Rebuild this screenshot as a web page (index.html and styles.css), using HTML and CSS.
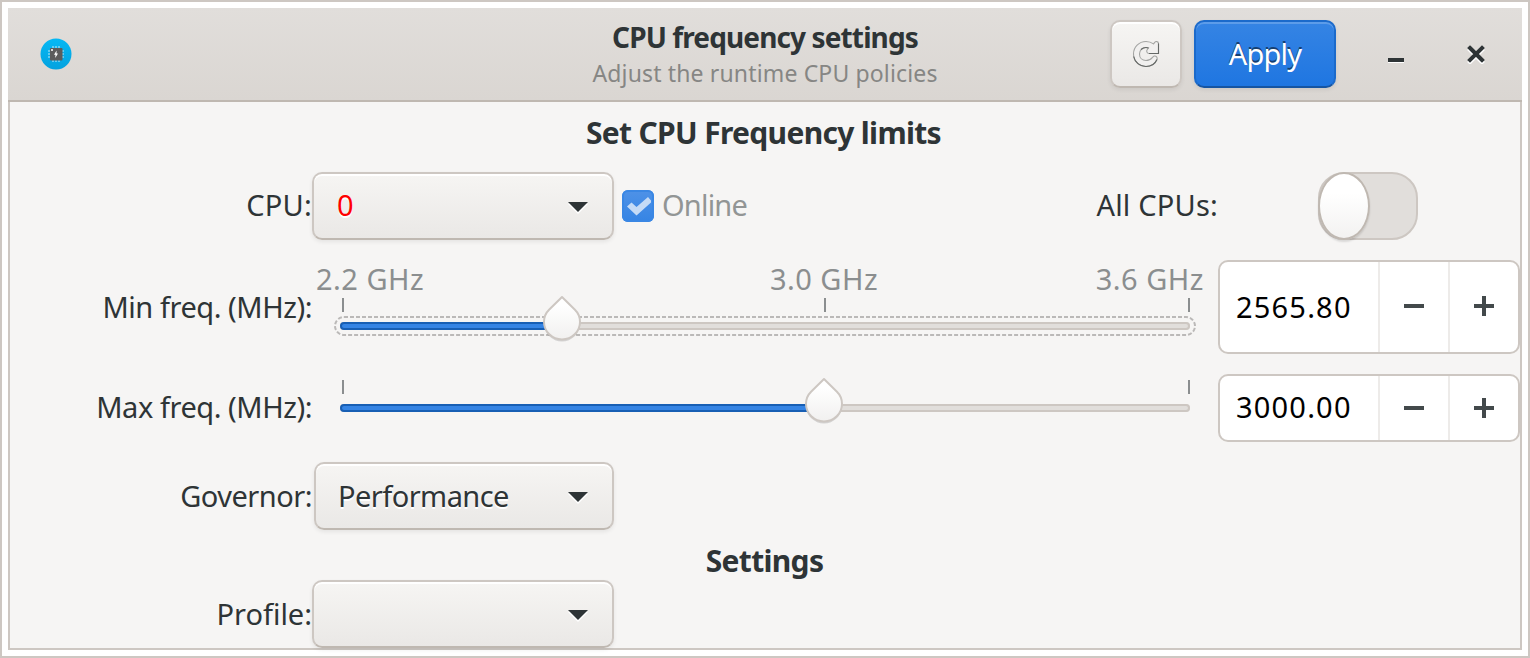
FILE: index.html
```html
<!DOCTYPE html>
<html lang="en">
<head>
<meta charset="utf-8">
<title>CPU frequency settings</title>
<link rel="stylesheet" href="styles.css">
</head>
<body>
<div class="window">
  <header class="headerbar">
    <svg class="app-icon" viewBox="0 0 32 32" width="32" height="32">
      <defs><linearGradient id="disc" x1="0" y1="0" x2="0" y2="1"><stop offset="0" stop-color="#05b8f4"/><stop offset="1" stop-color="#04a2df"/></linearGradient></defs>
      <circle cx="16" cy="16" r="15.5" fill="url(#disc)"/>
      <path d="M13 8v16M16 8v16M19 8v16M8 13h16M8 16h16M8 19h16" stroke="#7fd3f3" stroke-width="1.6"/>
      <rect x="10" y="10" width="12.5" height="12.5" rx="1" fill="#5c5c5c"/>
      <rect x="11" y="11" width="2" height="2" fill="#d8d8d8"/>
      <path d="M16.600 12.500l-2.600 4.200h1.500l-.3 3.300l2.800-4.500h-1.500z" fill="#fff"/>
    </svg>
    <div class="titles">
      <div class="title">CPU frequency settings</div>
      <div class="subtitle">Adjust the runtime CPU policies</div>
    </div>
    <div class="actions">
      <button class="button reload">
        <svg viewBox="0 0 28 28" width="28" height="28">
          <path d="M14 1.500C7 1.500 1.500 7 1.500 14S7 26.500 14 26.500c5 0 9-2.500 11-7c.8-2-.8-3.800-2.700-3.500c-2.300.4-2.300 4.500-8.300 4.500c-3.800 0-6.500-2.700-6.500-6.500s2.700-6.500 6.500-6.500c1 0 1.800.2 2.500.5l-1.200 1.500c-1.300 1.700-.3 4 1.700 4h9.500V3.500c0-2.300-3-2.500-4-.8l-1 1.200C19.300 2.300 17 1.500 14 1.500z" fill="#f1f0ef" stroke="#a3a4a2" stroke-width="1.100"/>
          <path d="M1.700 16.500c1 5.700 6.300 10 12.300 10c5 0 9-2.500 11-7M26.500 3.500v10H17M9 9.500c1.500-1.300 3.200-2 5-2c1 0 1.800.2 2.500.5" fill="none" stroke="#656866" stroke-width="1.100"/>
        </svg>
      </button>
      <button class="button apply">Apply</button>
      <svg class="wm minimize" viewBox="0 0 18 18" width="18" height="18"><path d="M1 17h16" stroke="#fff" stroke-width="2"/><path d="M1 15h16" stroke="#2e3436" stroke-width="4"/></svg>
      <svg class="wm close" viewBox="0 0 18 19" width="18" height="19"><path d="M3 5l12 12M15 5L3 17" stroke="#fff" stroke-width="4" stroke-linecap="square"/><path d="M3 3l12 12M15 3L3 15" stroke="#2e3436" stroke-width="4" stroke-linecap="square"/></svg>
    </div>
  </header>
  <main class="content">
    <h1 class="heading">Set CPU Frequency limits</h1>
    <div class="row row-cpu">
      <label class="label">CPU:</label>
      <div class="combo"><span class="cpu-number">0</span><i class="arrow"></i></div>
      <span class="check"><svg viewBox="0 0 32 32" width="32" height="32"><path d="M5 16.500L9.500 12.500l5 4.500L26 7l3 3.500v2L14.500 25.500z" fill="#c5dbf6"/></svg></span>
      <span class="online">Online</span>
      <span class="all-cpus">All CPUs:</span>
      <span class="switch"><i class="knob"></i></span>
    </div>
    <div class="row row-min">
      <label class="label">Min freq. (MHz):</label>
      <div class="scale">
        <div class="marks"><span>2.2 GHz</span><span class="mark-mid">3.0 GHz</span><span>3.6 GHz</span></div>
        <div class="ticks"><i></i><i class="mid"></i><i></i></div>
        <div class="trough"><div class="fill" style="width:222px"></div>
          <svg class="focus" viewBox="0 0 862 20" width="862" height="20"><rect x="1" y="1" width="860" height="18" rx="9" fill="none" stroke="#bbb9b8" stroke-width="2" stroke-dasharray="4 2"/></svg>
          <svg class="handle" style="left:202px" viewBox="0 0 40 48" width="40" height="48"><use href="#drop"/></svg>
        </div>
      </div>
      <div class="spin"><span class="value">2565.80</span><i class="step"></i><i class="step plus"></i></div>
    </div>
    <div class="row row-max">
      <label class="label">Max freq. (MHz):</label>
      <div class="scale">
        <div class="ticks"><i></i><i></i></div>
        <div class="trough"><div class="fill" style="width:484px"></div>
          <svg class="handle" style="left:464px" viewBox="0 0 40 48" width="40" height="48"><use href="#drop"/></svg>
        </div>
      </div>
      <div class="spin"><span class="value">3000.00</span><i class="step"></i><i class="step plus"></i></div>
    </div>
    <div class="row row-governor">
      <label class="label">Governor:</label>
      <div class="combo">Performance<i class="arrow"></i></div>
    </div>
    <h1 class="heading settings">Settings</h1>
    <div class="row row-profile">
      <label class="label">Profile:</label>
      <div class="combo"><i class="arrow"></i></div>
    </div>
  </main>
</div>
<svg class="defs" width="0" height="0">
  <defs>
    <linearGradient id="dropfill" x1="0" y1="0" x2="0" y2="1"><stop offset="0.200" stop-color="#fff"/><stop offset="1" stop-color="#f1f0ef"/></linearGradient>
    <g id="drop">
      <path d="M20 4.500L32.700 17.600A18 17.500 0 1 1 7.300 17.600z" fill="#000" opacity=".14"/>
      <path d="M20 3L32.700 15.500A18 17.500 0 1 1 7.300 15.500z" fill="url(#dropfill)" stroke="#cdc7c2" stroke-width="2" stroke-linejoin="round"/>
    </g>
  </defs>
</svg>
</body>
</html>
```
FILE: styles.css
```css
* { box-sizing: border-box; }
body {
  margin: 0;
  font: 29px/38px "Noto Sans", "Open Sans", sans-serif;
  color: #2e3436;
  overflow: hidden;
}
.window {
  width: 1530px;
  height: 658px;
  border: 2px solid #cdc7c2;
  padding: 6px;
  background: #fff;
}
.headerbar {
  height: 94px;
  display: grid;
  grid-template-columns: 1fr auto 1fr;
  align-items: center;
  border-bottom: 2px solid #bfb8b1;
  background: linear-gradient(#e1dedb, #dad6d2);
}
.app-icon { margin-left: 32px; }
.titles { text-align: center; padding-top: 2px; }
.title { font-size: 28px; font-weight: 700; line-height: 36px; letter-spacing: -.88px; }
.subtitle { font-size: 23px; line-height: 36px; color: #868684; letter-spacing: .15px; }
.actions { display: flex; align-items: center; justify-content: flex-end; }
.button {
  height: 68px;
  padding: 0;
  font: inherit;
  border: 2px solid #cdc7c2;
  border-bottom-color: #bfb8b1;
  border-radius: 10px;
  background: linear-gradient(#f6f5f3, #eae8e6);
  box-shadow: inset 0 2px #fff, 0 2px 4px rgba(0, 0, 0, .07);
  display: flex;
  align-items: center;
  justify-content: center;
}
.reload { width: 72px; margin-right: 12px; }
.apply {
  width: 142px;
  padding-bottom: 1px;
  letter-spacing: -.8px;
  color: #fff;
  border-color: #1b6acb;
  border-bottom-color: #1655a2;
  background: linear-gradient(#3584e4, #1f76e1);
  box-shadow: inset 0 2px rgba(255, 255, 255, .2), 0 2px 4px rgba(0, 0, 0, .07);
  text-shadow: 0 -2px rgba(0, 0, 0, .5);
}
.minimize { margin: 0 62px 0 51px; }
.close { margin-right: 37px; }
.content {
  height: 548px;
  border: 2px solid #cdc7c2;
  border-top: 0;
  background: #f6f5f4;
}
.heading {
  margin: 0;
  padding: 12px 3px 0 0;
  height: 70px;
  font-size: 30px;
  font-weight: 700;
  text-align: center;
  letter-spacing: -.68px;
}
.settings { height: 50px; padding: 12px 1px 0 0; }
.row { display: flex; align-items: center; height: 68px; margin-bottom: 20px; }
.row-cpu { letter-spacing: .2px; }
.row-min { height: 94px; }
.row-governor { margin-bottom: 0; }
.row-profile { margin-bottom: 0; }
.label { width: 302px; text-align: right; }
.row-cpu .label { padding-bottom: 2px; letter-spacing: .2px; }
.row-min .label, .row-max .label { letter-spacing: -.45px; }
.row-max .label, .row-max .value { padding-bottom: 2px; }
.row-governor .label { letter-spacing: -.5px; }
.combo {
  width: 302px;
  height: 68px;
  padding: 0 24px 0 23px;
  display: flex;
  align-items: center;
  border: 2px solid #cdc7c2;
  border-bottom-color: #bfb8b1;
  border-radius: 10px;
  background: linear-gradient(#f6f5f3, #eae8e6);
  box-shadow: inset 0 2px #fff, 0 2px 4px rgba(0, 0, 0, .07);
  text-shadow: 0 2px #fff;
}
.row-governor .combo { width: 300px; margin-left: 2px; padding-left: 22px; letter-spacing: -.55px; }
.cpu-number { color: #f00; padding-bottom: 2px; }
.arrow {
  margin: 2px 0 0 auto;
  border: 10px solid transparent;
  border-top-color: #2e3436;
  border-bottom: 0;
  filter: drop-shadow(0 2px #fff);
}
.check {
  width: 32px;
  height: 32px;
  margin-left: 8px;
  border-radius: 6px;
  background: linear-gradient(#4f92e7, #3584e4);
  box-shadow: inset 0 0 0 2px #3a87e4;
}
.check svg { display: block; }
.online { margin-left: 8px; padding-bottom: 2px; color: #929595; letter-spacing: -.8px; }
.all-cpus { margin-left: auto; padding-bottom: 2px; }
.switch {
  width: 100px;
  height: 68px;
  margin: 0 102px 0 100px;
  border: 2px solid #cdc7c2;
  border-radius: 26px;
  background: #e1dedb;
}
.knob {
  display: block;
  width: 52px;
  height: 68px;
  margin: -2px;
  border: 2px solid #bfb8b1;
  border-radius: 50%;
  background: linear-gradient(#fff 30%, #f3f2f1);
  box-shadow: 0 2px 2px rgba(0, 0, 0, .12);
}
.scale { width: 906px; height: 100%; }
.marks { display: flex; justify-content: space-between; height: 38px; padding: 0 14px 0 4px; color: #8b8e8f; letter-spacing: .5px; }
.mark-mid { margin-left: 128px; }
.ticks { display: flex; justify-content: space-between; width: 848px; margin-left: 30px; }
.ticks i { width: 2px; height: 14px; background: #8b8e8f; }
.ticks .mid { margin-left: 118px; }
.row-max .ticks { margin-top: 6px; }
.trough {
  position: relative;
  width: 850px;
  height: 8px;
  margin: 10px 0 0 28px;
  border-radius: 4px;
  background: #e1dedb;
  box-shadow: inset 0 0 0 2px #cdc7c2;
}
.fill { height: 8px; border: 2px solid #185fb4; border-radius: 4px; background: #3584e4; }
.focus { position: absolute; left: -6px; top: -6px; }
.handle { position: absolute; top: -28px; }
.spin {
  width: 302px;
  height: 100%;
  display: flex;
  border: 2px solid #cdc7c2;
  border-radius: 10px;
  background: #fff;
  color: #000;
}
.value { width: 158px; padding-left: 16px; align-self: center; letter-spacing: 1.2px; }
.step {
  width: 70px;
  border-left: 2px solid #edebe9;
  background: linear-gradient(#43494b, #43494b) center / 20px 4px no-repeat;
}
.plus { background: linear-gradient(#43494b, #43494b) center / 20px 4px no-repeat, linear-gradient(#43494b, #43494b) center / 4px 20px no-repeat; }
.row-min .step { background-position-y: calc(50% - 1px); }
.defs { position: absolute; }
```
